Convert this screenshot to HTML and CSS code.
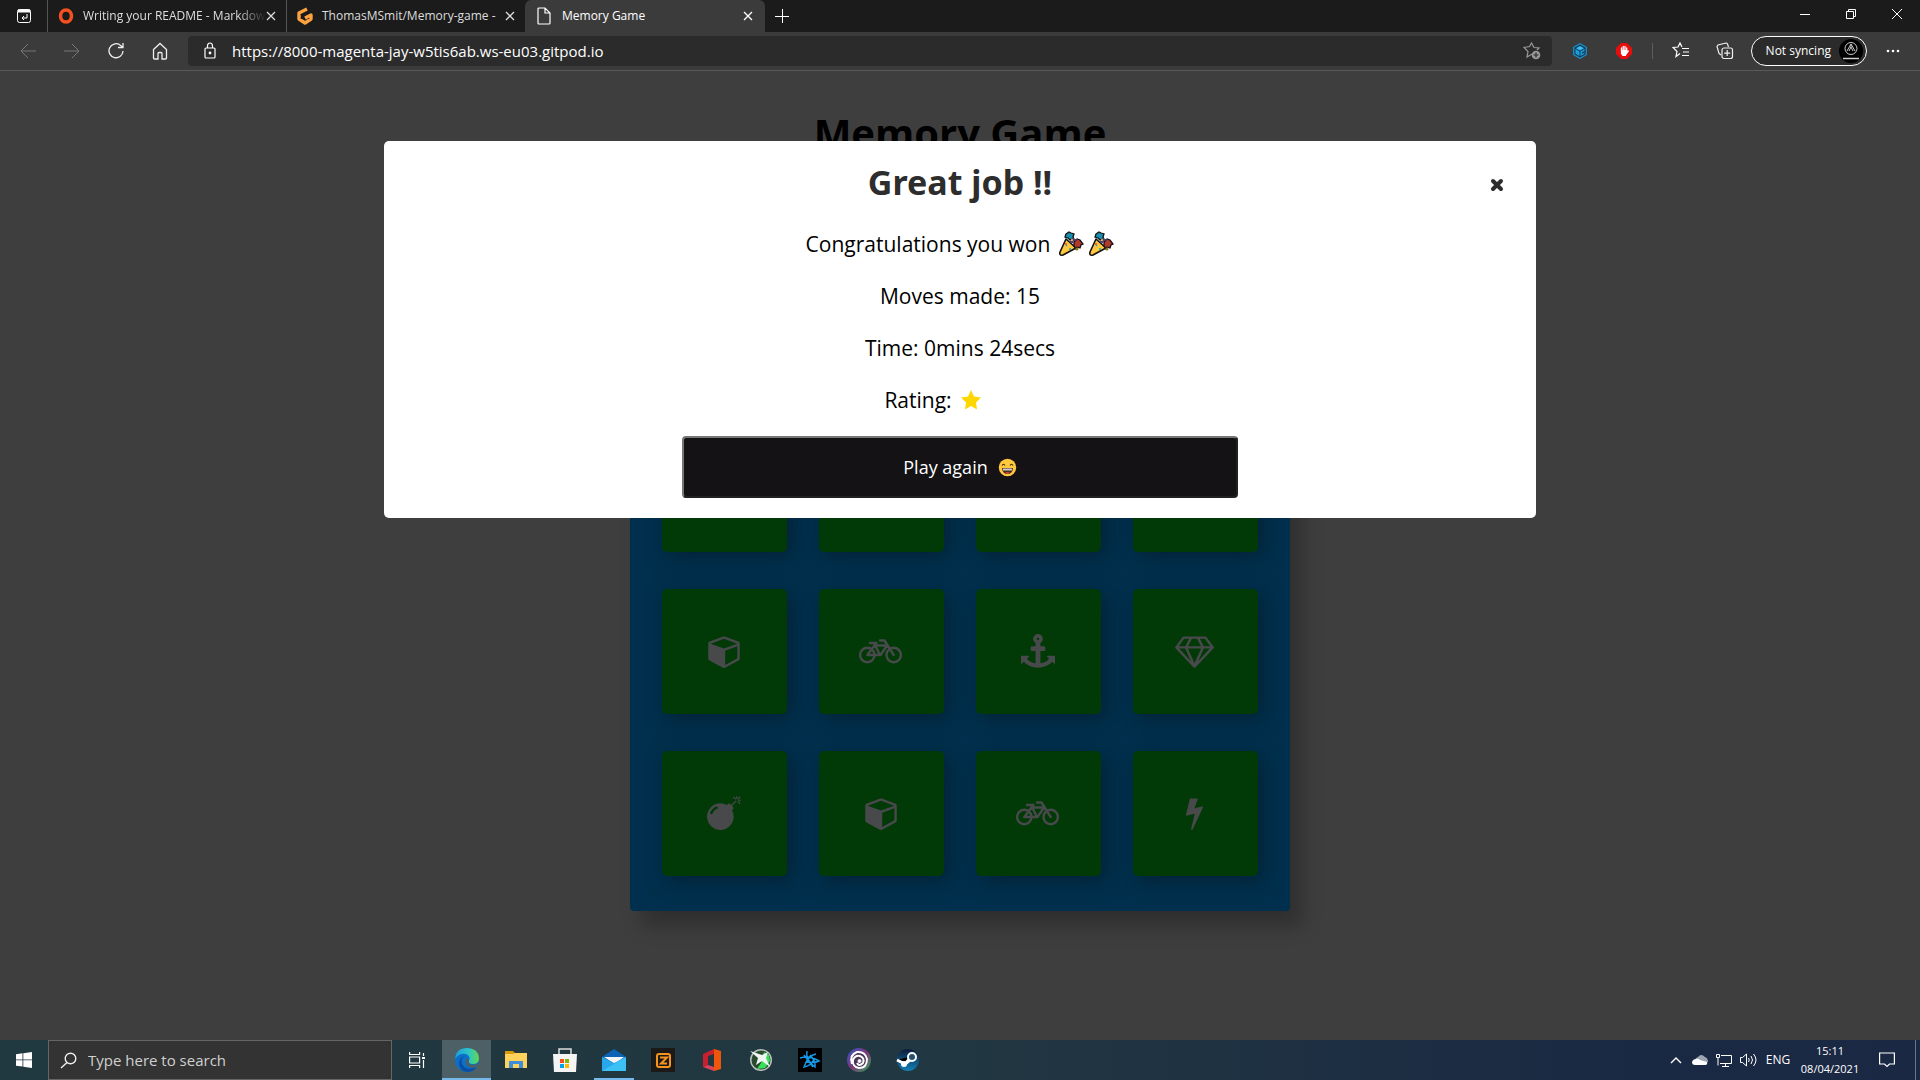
FILE: index.html
```html
<!DOCTYPE html>
<html lang="en">
<head>
<meta charset="utf-8">
<title>Memory Game</title>
<link rel="stylesheet" href="styles.css">
</head>
<body>
<svg class="defs" aria-hidden="true">
  <symbol id="cube" viewBox="0 0 1664 1792"><path d="M896 1629l640-349v-636l-640 233v752zm-64-865l698-254-698-254-698 254zm832-252v768q0 35-18 65t-49 47l-704 384q-28 16-61 16t-61-16l-704-384q-31-17-49-47t-18-65v-768q0-40 23-73t61-47l704-256q22-8 44-8t44 8l704 256q38 14 61 47t23 73z"/></symbol>
  <symbol id="anchor" viewBox="0 0 1792 1792"><path d="M960 256q0-26-19-45t-45-19-45 19-19 45 19 45 45 19 45-19 19-45zm832 928v352q0 22-20 30-8 2-12 2-12 0-23-9l-93-93q-119 143-318.500 226.500t-429.500 83.500-429.500-83.500-318.500-226.500l-93 93q-9 9-23 9-4 0-12-2-20-8-20-30v-352q0-14 9-23t23-9h352q22 0 30 20 8 19-7 35l-100 100q67 91 189.500 153.500t271.500 82.500v-647h-192q-26 0-45-19t-19-45v-128q0-26 19-45t45-19h192v-163q-58-34-93-92.500t-35-128.500q0-106 75-181t181-75 181 75 75 181q0 70-35 128.500t-93 92.500v163h192q26 0 45 19t19 45v128q0 26-19 45t-45 19h-192v647q149-20 271.500-82.500t189.500-153.500l-100-100q-15-16-7-35 8-20 30-20h352q14 0 23 9t9 23z"/></symbol>
  <symbol id="diamond" viewBox="0 0 2048 1792"><path d="M212 768l623 665-300-665h-323zm812 772l349-772h-698zm-486-900l204-384h-262l-288 384h346zm675 793l623-665h-323zm-530-793h682l-204-384h-274zm827 0h346l-288-384h-262zm141-486l384 512q14 18 13 41.500t-17 40.500l-960 1024q-18 20-47 20t-47-20l-960-1024q-16-17-17-40.500t13-41.500l384-512q18-26 51-26h1152q33 0 51 26z"/></symbol>
  <symbol id="bomb" viewBox="0 0 1792 1792"><path d="M571 589q-10-25-34-35t-49 0q-108 44-191 127t-127 191q-10 25 0 49t35 34q13 5 24 5 42 0 60-40 34-84 98.500-148.500t148.500-98.500q25-11 35-35t0-49zm942-356l46 46-244 243 68 68q19 19 19 45.500t-19 45.500l-64 64q89 161 89 343 0 143-55.500 273.500t-150 225-225 150-273.500 55.500-273.500-55.500-225-150-150-225-55.500-273.500 55.500-273.500 150-225 225-150 273.500-55.500q182 0 343 89l64-64q19-19 45.500-19t45.500 19l68 68zm8-56q-10 10-22 10-13 0-23-10l-91-90q-9-10-9-23t9-23q10-9 23-9t23 9l90 91q10 9 10 22.500t-10 22.500zm230 230q-11 9-23 9t-23-9l-90-91q-10-9-10-22.500t10-22.500q9-10 22.500-10t22.500 10l91 90q9 10 9 23t-9 23zm41-183q0 14-9 23t-23 9h-96q-14 0-23-9t-9-23 9-23 23-9h96q14 0 23 9t9 23zm-192-192v96q0 14-9 23t-23 9-23-9-9-23v-96q0-14 9-23t23-9 23 9 9 23zm151 55l-91 90q-10 10-22 10-13 0-23-10-10-9-10-22.500t10-22.500l90-91q10-9 23-9t23 9q9 10 9 23t-9 23z"/></symbol>
  <symbol id="bolt" viewBox="0 0 896 1792"><path d="M885 566q18 20 7 44l-540 1157q-13 25-42 25-4 0-14-2-17-5-25.500-19t-4.500-30l197-808-406 101q-4 1-12 1-18 0-31-11-18-15-13-39l201-825q4-14 16-23t28-9h328q19 0 32 12.500t13 29.500q0 8-5 18l-171 463 396-98q8-2 12-2 19 0 34 15z"/></symbol>
  <symbol id="bicycle" viewBox="0 0 43 34"><g fill="none" stroke="currentColor" stroke-width="2.400" stroke-linecap="round" stroke-linejoin="round"><circle cx="8.300" cy="21" r="7.200"/><circle cx="34.700" cy="21" r="7.200"/><path d="M8.300 21h13.200l6.500-9.500H15.500L8.300 21M15 9l6 12M11 9h6.500M21 6.500h4.500L34.700 21"/></g></symbol>
  <symbol id="popper" viewBox="0 0 26 26"><path d="M8 8l10 9-13 7q-4 1-3-3z" fill="#ffc83d" stroke="#111" stroke-width="1.600" stroke-linejoin="round"/><path d="M8 3l3-2 2 1 3 1-1 3 1 2-4 1-2-2-3-1z" fill="#178fb0" stroke="#111" stroke-width="1.300"/><path d="M16 11l3-3 3 1 3 4-2 1-1 3-3-1-1 2-2-3z" fill="#b3392c" stroke="#111" stroke-width="1.300"/><path d="M12 11q4 0 3-4M14 12q1-4 5-3" fill="none" stroke="#513a6e" stroke-width="1.800"/><path d="M8 14l1 1M12 17v2" stroke="#26a6d1" stroke-width="1.600"/><circle cx="8" cy="13" r="1" fill="#e74c30"/><circle cx="19" cy="18" r="1.500" fill="#8a7a18"/><circle cx="14" cy="9" r="1" fill="#ffc83d"/></symbol>
  <symbol id="star" viewBox="0 0 22 22"><path d="M11 1l3 6.500 7 1-5 5 1 7-6-3.500-6 3.500 1-7-5-5 7-1z" fill="#ffd700"/></symbol>
  <symbol id="x" viewBox="0 0 10 10"><path d="M1 1l8 8M9 1L1 9" fill="none" stroke="currentColor" stroke-width="1.300"/></symbol>
</svg>

<header class="browser">
  <div class="tabstrip">
    <button class="tab-actions" aria-label="Tab actions"><svg width="16" height="16" viewBox="0 0 16 16" fill="none" stroke="#fff"><rect x="1.500" y="1.500" width="13" height="13" rx="2"/><path d="M2 3h12" stroke-width="3"/><path d="M11 6v4H6M8 8l-2 2 2 2"/></svg></button>
    <div class="tab first">
      <svg width="16" height="16" viewBox="0 0 16 16"><ellipse cx="8" cy="8" rx="5.500" ry="6" fill="none" stroke="#f4511e" stroke-width="3.500"/></svg>
      <a href="#" class="tab-title">Writing your README - Markdow</a>
      <button class="tab-close" aria-label="Close tab"><svg width="10" height="10"><use href="#x"/></svg></button>
    </div>
    <div class="tab second">
      <svg width="16" height="18" viewBox="0 0 16 18" fill="none" stroke="#ffa13d" stroke-width="3.400" stroke-linejoin="round"><path d="M10 2L2 6v6l6 4 6-4V8l-6 3"/></svg>
      <a href="#" class="tab-title">ThomasMSmit/Memory-game -</a>
      <button class="tab-close" aria-label="Close tab"><svg width="10" height="10"><use href="#x"/></svg></button>
    </div>
    <div class="tab active">
      <svg width="14" height="18" viewBox="0 0 14 18" fill="none" stroke="#fff" stroke-width="1.200"><path d="M1 2q0-1 1-1h6l5 5v10q0 1-1 1H2q-1 0-1-1zM8 1v5h5"/></svg>
      <a href="#" class="tab-title">Memory Game</a>
      <button class="tab-close" aria-label="Close tab"><svg width="10" height="10"><use href="#x"/></svg></button>
    </div>
    <button class="new-tab" aria-label="New tab"><svg width="16" height="16" viewBox="0 0 16 16" stroke="#fff"><path d="M8.500 1v14M1 8.500h14"/></svg></button>
    <div class="window-controls">
      <button aria-label="Minimize"><svg width="10" height="10" stroke="#fff"><path d="M0 5.500h10"/></svg></button>
      <button aria-label="Restore"><svg width="10" height="10" fill="none" stroke="#fff"><path d="M.5 2.500h7v7h-7zM2.500 2V.5h7v7H8"/></svg></button>
      <button aria-label="Close"><svg width="10" height="10" stroke="#fff"><path d="M0 0l10 10M10 0L0 10"/></svg></button>
    </div>
  </div>
  <div class="toolbar">
    <nav class="nav">
      <button aria-label="Back"><svg width="16" height="16" fill="none" stroke="#777"><path d="M16 8H1M8 1L1 8l7 7"/></svg></button>
      <button aria-label="Forward"><svg width="16" height="16" fill="none" stroke="#777"><path d="M0 8h15M8 1l7 7-7 7"/></svg></button>
      <button aria-label="Refresh"><svg width="16" height="18" fill="none" stroke="#eee" stroke-width="1.300"><path d="M15 9a7 7 0 1 1-3-6l2.500 2M15 1v4.500h-5"/></svg></button>
      <button aria-label="Home"><svg width="16" height="18" fill="none" stroke="#eee" stroke-width="1.300"><path d="M1.500 7.500L8 1.500l6.500 6V16q0 1-1 1H10v-5.500q0-1-1-1H7q-1 0-1 1V17H2.500q-1 0-1-1z"/></svg></button>
    </nav>
    <div class="address">
      <svg width="12" height="18" fill="none" stroke="#fff" stroke-width="1.200"><rect x="1" y="6" width="10" height="10" rx="1"/><path d="M3.500 6V4a2.500 3 0 0 1 5 0v2"/><circle cx="6" cy="11" r=".8" fill="#fff"/></svg>
      <input type="text" aria-label="Address" value="https://8000-magenta-jay-w5tis6ab.ws-eu03.gitpod.io">
      <button aria-label="Add to favourites"><svg width="18" height="18" fill="none" stroke="#999" stroke-width="1.200"><path d="M9 12l-5 3 1-5.500-4-4 5.500-1L8.500 1 11 5.500l5 .5-2 2"/><circle cx="13" cy="13" r="4.300" fill="#999" stroke="none"/><path d="M13 10.500v5M10.500 13h5" stroke="#2b2b2b"/></svg></button>
    </div>
    <div class="extensions">
      <button aria-label="Gitpod extension"><svg width="16" height="16" fill="none"><path d="M8 .7l6.300 3.600v7.400L8 15.300l-6.300-3.600V4.300z" fill="#123f58" stroke="#1a8fc8" stroke-width="1.300"/><path d="M8 3l4 2.300L8 7.500 4 5.300z" fill="#35bdf5"/><path d="M3.500 6L7.500 8.400V13l-4-2.300zM12.500 6v2L10 9.300v1.400l2.500-1.200v1.200l-4 2.300V8.400z" fill="#1d9ddb"/></svg></button>
      <button aria-label="AdBlock"><svg width="16" height="16"><path d="M5 0h6l5 5v6l-5 5H5l-5-5V5z" fill="#e60d0d"/><path d="M5.500 8V5M7.200 7V3.500M9 7V3.500M10.700 8V5M10.700 10l1.600-2" stroke="#fff" stroke-width="1.300" stroke-linecap="round"/><path d="M4.900 7h6.400v3l-1.500 3H6.500L4.900 10.500z" fill="#fff"/></svg></button>
      <span class="bar"></span>
      <button aria-label="Favourites"><svg width="18" height="18" fill="none" stroke="#fff" stroke-width="1.200"><path d="M8 11.500L4 14.500l1-5-4-4 5-.5L8 1l2 4M10 6.500h7M11 10h6M10 13.500h7"/></svg></button>
      <button aria-label="Collections"><svg width="18" height="18" fill="none" stroke="#eee" stroke-width="1.200"><rect x="6" y="6" width="10.500" height="10.500" rx="2"/><path d="M11.200 8v6M8.200 11.200h6M5 13l-2-1.500-2-7 1-1.500 8-2q1 0 1.500 1l1 3"/></svg></button>
    </div>
    <button class="profile">Not syncing <svg width="24" height="24" fill="none" stroke="#ccc"><circle cx="12" cy="12" r="12" fill="#000" stroke="none"/><circle cx="12" cy="9.500" r="6"/><path d="M8 12l4-7 4 7M10 12l2-4 2 4M12 5v3" /><path d="M4 19.500h16" stroke-width="1.500"/></svg></button>
    <button class="more" aria-label="Settings and more"><svg width="14" height="4" fill="#fff"><circle cx="2" cy="2" r="1.300"/><circle cx="7" cy="2" r="1.300"/><circle cx="12" cy="2" r="1.300"/></svg></button>
  </div>
</header>

<main class="page">
  <h1>Memory Game</h1>
  <div class="deck">
    <button class="card" aria-label="Card"></button>
    <button class="card" aria-label="Card"></button>
    <button class="card" aria-label="Card"></button>
    <button class="card" aria-label="Card"></button>
    <button class="card" aria-label="Card"></button>
    <button class="card" aria-label="Card"></button>
    <button class="card" aria-label="Card"></button>
    <button class="card" aria-label="Card"></button>
    <button class="card" aria-label="Cube"><svg width="32" height="34"><use href="#cube"/></svg></button>
    <button class="card" aria-label="Bicycle"><svg width="43" height="34"><use href="#bicycle"/></svg></button>
    <button class="card" aria-label="Anchor"><svg width="34" height="34"><use href="#anchor"/></svg></button>
    <button class="card" aria-label="Diamond"><svg width="39" height="34"><use href="#diamond"/></svg></button>
    <button class="card" aria-label="Bomb"><svg width="34" height="34"><use href="#bomb"/></svg></button>
    <button class="card" aria-label="Cube"><svg width="32" height="34"><use href="#cube"/></svg></button>
    <button class="card" aria-label="Bicycle"><svg width="43" height="34"><use href="#bicycle"/></svg></button>
    <button class="card" aria-label="Bolt"><svg width="17" height="34"><use href="#bolt"/></svg></button>
  </div>
  <div class="overlay">
    <section class="modal" role="dialog" aria-labelledby="modal-title">
      <button class="modal-close" aria-label="Close"><svg width="14" height="14" viewBox="0 0 14 14"><path d="M3 3l8 8M11 3l-8 8" stroke="#2e2d2d" stroke-width="4" stroke-linecap="round"/></svg></button>
      <h2 id="modal-title">Great job !!</h2>
      <p>Congratulations you won <span class="emoji"><svg width="26" height="26"><use href="#popper"/></svg><svg width="26" height="26"><use href="#popper"/></svg></span></p>
      <p>Moves made: 15</p>
      <p>Time: 0mins 24secs</p>
      <p>Rating: <span class="stars"><svg width="22" height="22"><use href="#star"/></svg></span></p>
      <button class="play">Play again <svg width="19" height="19" viewBox="0 0 19 19"><circle cx="9.500" cy="9.500" r="8.700" fill="#ffc83d"/><path d="M4 7.500q1.500-2.500 3 0M12 7.500q1.500-2.500 3 0" fill="none" stroke="#3a2a10" stroke-width="1.200"/><path d="M4 10h11q-.5 6-5.500 6T4 10z" fill="#4a2b20"/><path d="M5 10.500h9v2H5z" fill="#ccc"/><path d="M7 15q2.500-2 5 0-2.500 1.500-5 0z" fill="#e8463c"/></svg></button>
    </section>
  </div>
</main>

<footer class="taskbar">
  <button class="start" aria-label="Start"><svg width="16" height="16" fill="#fff"><path d="M0 2.300l6.500-1v6.200H0zM7.300 1.200L16 0v7.500H7.300zM0 8.300h6.500v6.300L0 13.700zM7.300 8.300H16V16l-8.700-1.200z"/></svg></button>
  <label class="search"><svg width="17" height="17" fill="none" stroke="#eee" stroke-width="1.400"><circle cx="10.500" cy="6.500" r="5.300"/><path d="M7 10.500L1 16"/></svg><input type="text" placeholder="Type here to search" aria-label="Search"></label>
  <button class="task-view" aria-label="Task view"><svg width="16" height="16" fill="none" stroke="#fff" stroke-width="1.200"><path d="M.6 0v2.500h10V0M.6 16v-2.500h10V16M.6 5h10v6H.6zM14.500 1v3M14.500 8v8"/><path d="M13 5h3v2h-3z" fill="#fff" stroke="none"/></svg></button>
  <div class="apps">
    <button class="current open" aria-label="Edge"><svg width="24" height="24" viewBox="0 0 24 24"><defs><linearGradient id="eg"><stop offset="0" stop-color="#1b9de2"/><stop offset=".6" stop-color="#30c6c0"/><stop offset="1" stop-color="#62d84e"/></linearGradient></defs><circle cx="12" cy="12" r="12" fill="#0c6fc8"/><path d="M0 11Q1 0 12 0q11 0 12 10 0 6-6 6-5 0-4-3 2-5-3-7-7-1-11 5z" fill="url(#eg)"/><path d="M9 8q-5 5 0 11 6 4 13-1-3 6-10 6Q5 23 4 16q0-6 5-8z" fill="#0a4fa3"/><path d="M14 13q-1 3 3 4 4 0 6-2l-1 4q-6 2-10-1-3-4 0-8 2 1 2 3z" fill="#4d6066"/></svg></button>
    <button aria-label="File Explorer"><svg width="22" height="20"><path d="M0 1h8l2 2h11v4H0z" fill="#d99a08"/><path d="M0 4h8l2-1h12v15H0z" fill="#ffd25c"/><path d="M4 18v-7h14v7h-4v-4H8v4z" fill="#3c8fd9"/></svg></button>
    <button aria-label="Microsoft Store"><svg width="24" height="24"><path d="M6 6V1h12v5" fill="none" stroke="#ddd" stroke-width="1.500"/><path d="M0 6h24l-1 18H1z" fill="#f4f4f4"/><path d="M7 11h4v4H7z" fill="#f25022"/><path d="M12 11h4v4h-4z" fill="#7fba00"/><path d="M7 16h4v4H7z" fill="#00a4ef"/><path d="M12 16h4v4h-4z" fill="#ffb900"/></svg></button>
    <button class="open" aria-label="Mail"><svg width="24" height="22"><path d="M0 8l12-8 12 8v4H0z" fill="#0c64b6"/><path d="M2 8h20l-9 7z" fill="#f5f5f5"/><path d="M0 8l12 6 12-6v14H0z" fill="#28a8ea"/><path d="M0 22L24 8v14z" fill="#3dc1f5"/></svg></button>
    <button aria-label="Zone"><svg width="24" height="24" fill="none" stroke="#f7941d" stroke-width="2"><path d="M0 0h24v24H0z" fill="#1b1a19" stroke="none"/><rect x="6" y="6" width="13" height="13" rx="2"/><path d="M9 9.500h7l-6 6h6"/></svg></button>
    <button aria-label="Office"><svg width="18" height="22"><path d="M0 5l11-5v5L5 7v9l-5 2z" fill="#c8202f"/><path d="M11 0l7 2v18l-7 2z" fill="#f0560b"/><path d="M0 18l5-2 6 2v4z" fill="#e0405a"/></svg></button>
    <button aria-label="Boost"><svg width="24" height="24"><circle cx="12" cy="12" r="11" fill="#b9c1bb"/><circle cx="12" cy="12" r="9.500" fill="#2a4a30"/><path d="M15 4l5 3 1 6-5 7-8 1 4-6z" fill="#35e05b"/><path d="M1 3l12 4 6-3-2 6 4 9-8-6-6 4 2-7z" fill="#f1f5f1"/></svg></button>
    <button aria-label="Battle.net"><svg width="24" height="24" fill="none" stroke="#1497e5" stroke-width="1.500"><path d="M0 0h24v24H0z" fill="#000" stroke="none"/><path d="M2 10q9-3 19 3-6 3-13 0M9 3q-2 8 8 16 1-6-5-12M18 6q-8 1-12 13 7-1 10-8M6 7l9 12"/></svg></button>
    <button aria-label="Ubisoft Connect"><svg width="24" height="24" fill="none" stroke="#fff"><defs><linearGradient id="ub" x2="1" y2="1"><stop offset="0" stop-color="#3355c9"/><stop offset=".5" stop-color="#803679"/><stop offset="1" stop-color="#30a854"/></linearGradient></defs><circle cx="12" cy="12" r="12" fill="url(#ub)" stroke="none"/><circle cx="12" cy="12" r="9" fill="#4b3556" stroke="none"/><path d="M5 16Q2 7 10 4q8-1 10 7 0 9-8 9-7-1-6-8 2-5 7-4 5 2 3 7-4 4-6 0" stroke-width="2"/><circle cx="12.500" cy="13" r="1.500" fill="#fff"/></svg></button>
    <button aria-label="Steam"><svg width="24" height="24"><defs><linearGradient id="st" x2="0" y2="1"><stop offset="0" stop-color="#0b1a3a"/><stop offset="1" stop-color="#1380b8"/></linearGradient></defs><circle cx="12" cy="12" r="11" fill="url(#st)"/><path d="M1 12l8 4 7-8M8 17l7-6" stroke="#fff" stroke-width="3"/><circle cx="16" cy="9" r="4" fill="#27506e" stroke="#fff" stroke-width="2"/><circle cx="8" cy="16" r="3" fill="#fff"/></svg></button>
  </div>
  <div class="tray">
    <button aria-label="Show hidden icons"><svg width="12" height="8" fill="none" stroke="#fff" stroke-width="1.400"><path d="M1 7l5-5 5 5"/></svg></button>
    <button aria-label="OneDrive"><svg width="16" height="12"><path d="M3 7q0-3 3-4 3-4 7 0 3 1 3 5l-7 2z" fill="#9da5b2"/><path d="M3 11q-3 0-3-3 1-3 4-3 2-1 4 1l7 2q1 3-2 3z" fill="#fff"/></svg></button>
    <button aria-label="Network"><svg width="16" height="14" fill="none" stroke="#fff"><path d="M5 2.500h10.500v8H4M9.500 10.500v3M6 13.500h7M.5 1.500h3v3h-3zM2 4.500v8"/></svg></button>
    <button aria-label="Volume"><svg width="17" height="14" fill="none" stroke="#fff"><path d="M.5 4.500h2l4-3.500v12l-4-3.500h-2zM8.500 5q1.500 2 0 4M11 3q3 4 0 8M13.500 1q5 6 0 12"/></svg></button>
    <button class="lang">ENG</button>
    <button class="clock"><time>15:11</time><time>08/04/2021</time></button>
    <button class="notifications" aria-label="Notifications"><svg width="16" height="18" fill="none" stroke="#fff" stroke-width="1.200"><path d="M.6 2h14.800v11H10.500L8 15.500 5.500 13H.6z"/></svg></button>
    <span class="peek"></span>
  </div>
</footer>
</body>
</html>
```
FILE: styles.css
```css
* { box-sizing: border-box; }
body {
  margin: 0;
  min-height: 100vh;
  display: flex;
  flex-direction: column;
  background: #3e3e3e;
  color: #fff;
  font: 12px/16px "Segoe UI", "Open Sans", sans-serif;
}
button {
  display: flex;
  align-items: center;
  justify-content: center;
  flex: none;
  padding: 0;
  border: 0;
  background: none;
  color: inherit;
  font: inherit;
}
input { border: 0; padding: 0; background: none; color: inherit; min-width: 0; outline: 0; }
a { color: inherit; text-decoration: none; }
svg { display: block; flex: none; }
.defs { position: absolute; width: 0; height: 0; }

/* browser chrome */
.tabstrip { display: flex; height: 32px; background: #1b1b1b; }
.tab-actions { width: 47px; }
.tab { display: flex; align-items: center; width: 239px; padding: 0 10px; color: #ddd; }
.tab.first, .tab.second { border-left: 1px solid #555; }
.tab.active { width: 240px; background: #3b3b3b; border-radius: 6px 6px 0 0; padding: 0 12px; color: #fff; }
.tab-title { flex: 1; padding-left: 9px; overflow: hidden; white-space: nowrap; }
.active .tab-title { padding-left: 11px; }
.first .tab-title {
  -webkit-mask-image: linear-gradient(to right, #000 85%, transparent);
  mask-image: linear-gradient(to right, #000 85%, transparent);
}
.new-tab { width: 34px; }
.window-controls { display: flex; margin-left: auto; height: 28px; }
.window-controls button { width: 46px; }
.toolbar { display: flex; align-items: center; height: 39px; padding: 0 8px 0 6px; background: #3b3b3b; border-bottom: 1px solid #595959; }
.nav { display: flex; }
.nav button { width: 44px; height: 30px; }
.address { flex: 1; display: flex; align-items: center; gap: 16px; height: 30px; margin-left: 6px; padding: 0 11px 0 16px; background: #2b2b2b; border-radius: 4px; }
.address input { flex: 1; font: 15px/20px "Segoe UI", "Open Sans", sans-serif; }
.extensions { display: flex; align-items: center; padding: 0 4px 0 6px; }
.extensions button { width: 44px; }
.bar { width: 1px; height: 16px; margin: 0 6px; background: #5c5c5c; }
.profile { height: 30px; padding: 0 3px 0 14px; gap: 8px; border: 1px solid #fff; border-radius: 15px; background: #2b2b2b; }
.more { width: 38px; margin-left: 7px; }

/* game page */
.page { position: relative; flex: 1; padding: 28px 16px 64px; }
h1 { margin: 0 0 66px; font: bold 40px/68px "Comic Sans MS", "Open Sans", sans-serif; color: #000; text-align: center; }
.deck {
  display: grid;
  grid-template-columns: repeat(4, 1fr);
  gap: 37px 32px;
  max-width: 660px;
  margin: 0 auto;
  padding: 32px 32px 35px;
  background: #00304d;
  border-radius: 4px;
  box-shadow: 12px 15px 20px rgba(0, 0, 0, .25);
}
.card { aspect-ratio: 1; padding: 0 2px 2px 0; border-radius: 5px; background: #023a07; color: #47494b; box-shadow: 5px 5px 20px rgba(8, 20, 32, .5); }
.card svg { fill: currentColor; }

/* result dialog */
.overlay { position: absolute; inset: 0; padding-top: 70px; }
.modal { position: relative; width: 60%; margin: 0 auto; padding: 20px; background: #fff; border-radius: 5px; color: #000; text-align: center; }
.modal-close { position: absolute; top: 37px; right: 32px; }
.modal h2 { margin: 0 0 25px; font: bold 34px/42px Tahoma, "Noto Sans", sans-serif; color: #2e2d2d; }
.modal p { display: flex; align-items: center; justify-content: center; gap: 8px; margin: 0 0 20px; font: 21px/32px "Comic Sans MS", "Open Sans", sans-serif; white-space: nowrap; }
.emoji { display: flex; gap: 4px; }
.stars { display: flex; width: 76px; }
.modal .play {
  width: 50%;
  height: 62px;
  margin: 0 auto;
  gap: 10px;
  border: 2px solid;
  border-color: #767676 #212121 #212121 #767676;
  border-radius: 4px;
  background: #141214;
  color: #fff;
  font: 18px/24px "Comic Sans MS", "Open Sans", sans-serif;
}

/* desktop taskbar */
.taskbar { display: flex; height: 40px; background: linear-gradient(to right, #203840 0%, #213741 50%, #1a2943 85%, #1a2844); }
.start { width: 48px; }
.search { display: flex; align-items: center; gap: 11px; width: 344px; padding: 0 11px; background: #333; border: 1px solid #666; }
.search input { flex: 1; font: 15px/20px "Segoe UI", "Open Sans", sans-serif; }
.search input::placeholder { color: #d0d0d0; opacity: 1; }
.task-view { width: 50px; }
.apps { display: flex; }
.apps button { width: 49px; }
.apps .open { background: linear-gradient(#76b9ed, #76b9ed) bottom / 40px 2px no-repeat; }
.apps .current { background: linear-gradient(#76b9ed, #76b9ed) bottom / 100% 2px no-repeat, #4d6066; }
.tray { display: flex; margin-left: auto; }
.tray button { width: 24px; }
.tray .lang { width: 36px; margin-right: 5px; }
.tray .clock { flex-direction: column; width: 58px; font-size: 11px; line-height: 18px; }
.tray .notifications { width: 56px; }
.peek { width: 5px; border-left: 1px solid #6c7588; }
```
